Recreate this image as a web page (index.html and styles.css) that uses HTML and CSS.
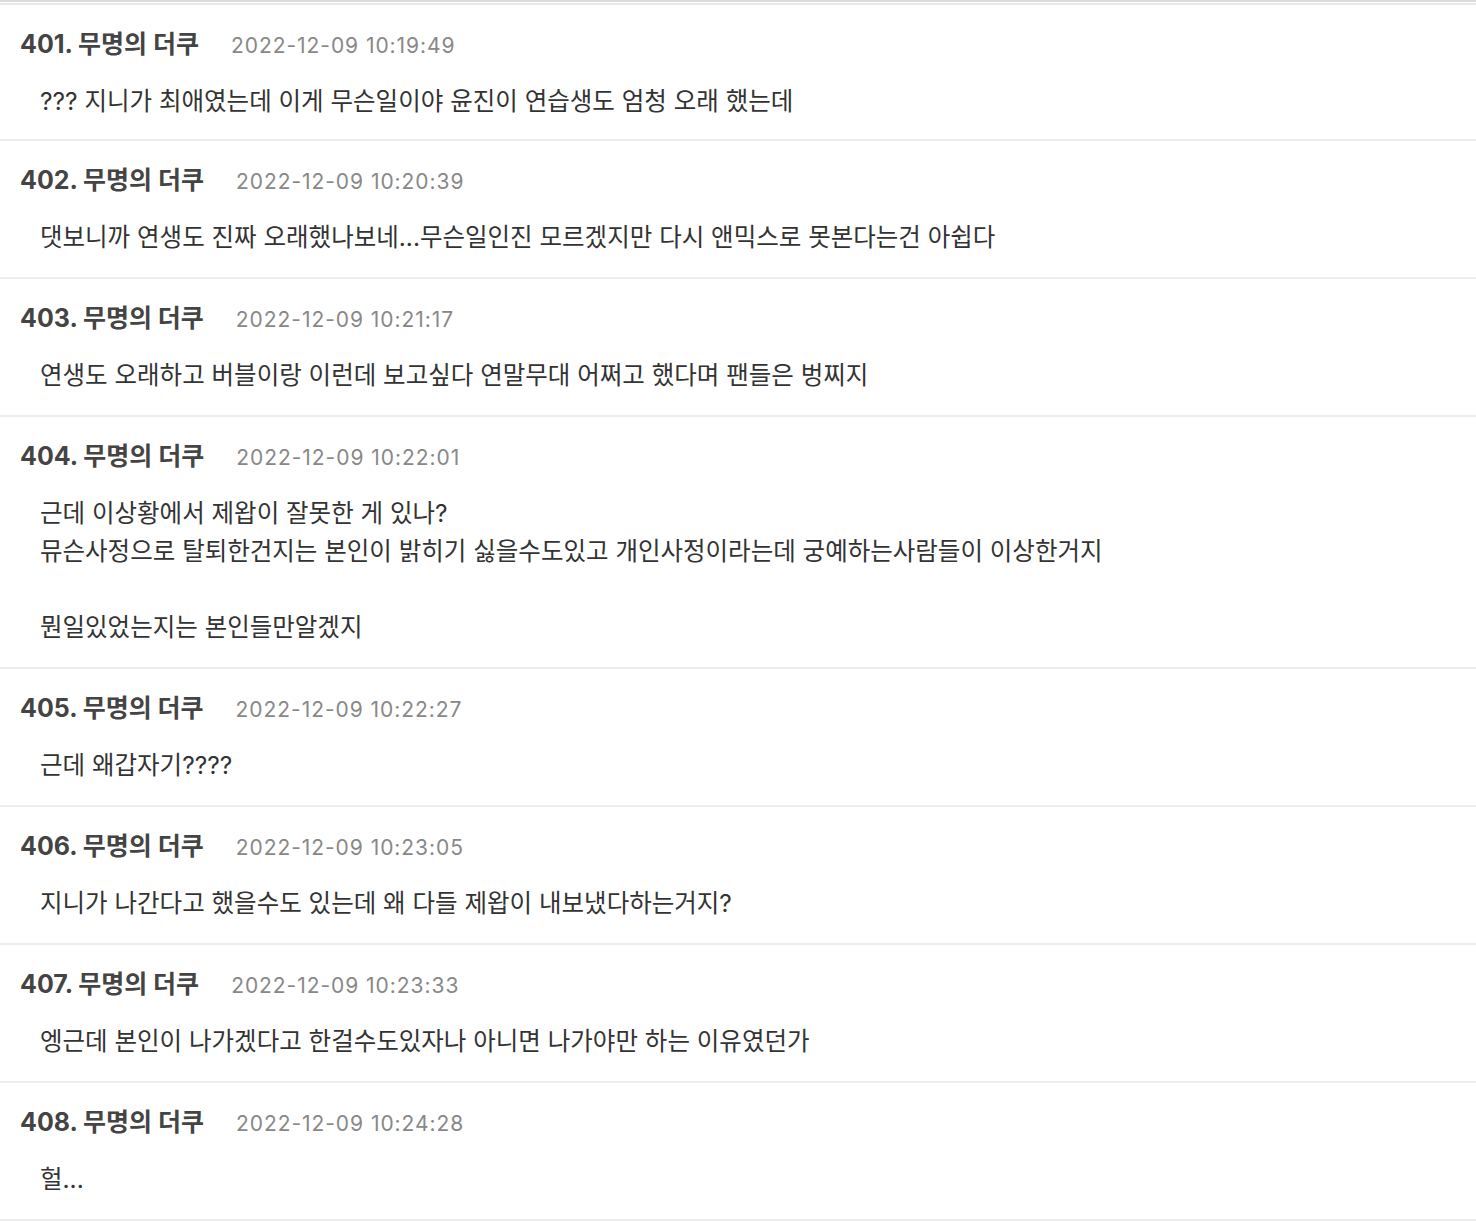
FILE: index.html
```html
<!DOCTYPE html>
<html lang="ko">
<head>
<meta charset="utf-8">
<title>댓글</title>
<link rel="stylesheet" href="styles.css">
</head>
<body>
<div class="list">
  <div class="item">
    <div class="head"><span class="name">401. 무명의 더쿠</span><span class="time">2022-12-09 10:19:49</span></div>
    <div class="body">??? 지니가 최애였는데 이게 무슨일이야 윤진이 연습생도 엄청 오래 했는데</div>
  </div>
  <div class="item">
    <div class="head"><span class="name">402. 무명의 더쿠</span><span class="time">2022-12-09 10:20:39</span></div>
    <div class="body">댓보니까 연생도 진짜 오래했나보네...무슨일인진 모르겠지만 다시 앤믹스로 못본다는건 아쉽다</div>
  </div>
  <div class="item">
    <div class="head"><span class="name">403. 무명의 더쿠</span><span class="time">2022-12-09 10:21:17</span></div>
    <div class="body">연생도 오래하고 버블이랑 이런데 보고싶다 연말무대 어쩌고 했다며 팬들은 벙찌지</div>
  </div>
  <div class="item">
    <div class="head"><span class="name">404. 무명의 더쿠</span><span class="time">2022-12-09 10:22:01</span></div>
    <div class="body">근데 이상황에서 제왑이 잘못한 게 있나?<br>뮤슨사정으로 탈퇴한건지는 본인이 밝히기 싫을수도있고 개인사정이라는데 궁예하는사람들이 이상한거지<br><br>뭔일있었는지는 본인들만알겠지</div>
  </div>
  <div class="item">
    <div class="head"><span class="name">405. 무명의 더쿠</span><span class="time">2022-12-09 10:22:27</span></div>
    <div class="body">근데 왜갑자기????</div>
  </div>
  <div class="item">
    <div class="head"><span class="name">406. 무명의 더쿠</span><span class="time">2022-12-09 10:23:05</span></div>
    <div class="body">지니가 나간다고 했을수도 있는데 왜 다들 제왑이 내보냈다하는거지?</div>
  </div>
  <div class="item">
    <div class="head"><span class="name">407. 무명의 더쿠</span><span class="time">2022-12-09 10:23:33</span></div>
    <div class="body">엥근데 본인이 나가겠다고 한걸수도있자나 아니면 나가야만 하는 이유였던가</div>
  </div>
  <div class="item">
    <div class="head"><span class="name">408. 무명의 더쿠</span><span class="time">2022-12-09 10:24:28</span></div>
    <div class="body">헐...</div>
  </div>
</div>
</body>
</html>
```

FILE: styles.css
```css
html, body {
  margin: 0;
  padding: 0;
  background: #ffffff;
}

body {
  font-family: Inter, "Noto Sans CJK KR", "Noto Sans", sans-serif;
  color: #333333;
}

.list {
  border-top: 2px solid #dcdcdc;
  padding-top: 1px;
}

.item {
  padding: 20px 20px 21px 20px;
  border-bottom: 2px solid #ececec;
}

.item:first-child {
  border-top: 2px solid #e8e8e8;
  padding-bottom: 19px;
}

.head {
  display: flex;
  align-items: baseline;
  height: 38px;
  line-height: 38px;
}

.name {
  font-size: 25px;
  font-weight: 700;
  color: #444444;
}

.time {
  margin-left: 32px;
  font-size: 21px;
  letter-spacing: 0.95px;
  color: #888888;
}

.body {
  margin-top: 19px;
  padding-left: 20px;
  font-size: 24.5px;
  line-height: 38px;
  color: #333333;
}
```
